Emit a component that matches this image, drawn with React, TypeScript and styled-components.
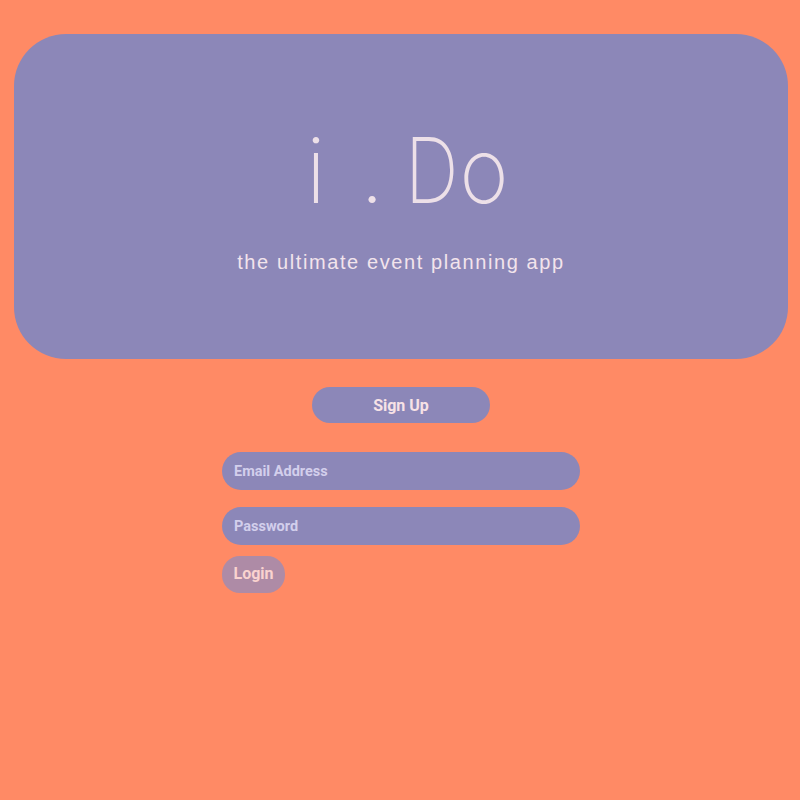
import React from "react";
import styled, { createGlobalStyle } from "styled-components";

const Global = createGlobalStyle`
  html, body { margin: 0; padding: 0; background: #ff8a65; }
  body { font-family: Roboto, "Liberation Sans", Arial, sans-serif; }
  * { box-sizing: border-box; }
`;

const Page = styled.div`
  min-height: 800px;
  padding: 34px 12px 0 14px;
  display: flex;
  flex-direction: column;
  align-items: center;
`;

const Hero = styled.header`
  width: 100%;
  height: 325px;
  background: #8c87b8;
  border-radius: 52px;
  display: flex;
  flex-direction: column;
  align-items: center;
  padding-top: 91px;
`;

const Title = styled.h1`
  margin: 0;
  display: flex;
  font-family: Inter, "DejaVu Sans", sans-serif;
  font-weight: 200;
  font-size: 91px;
  line-height: 91px;
  color: #ede0e8;
  padding-right: 2px;
`;

const Glyph = styled.span<{ $sx: number }>`
  display: inline-block;
  width: 56px;
  text-align: center;
  transform: scaleX(${(p) => p.$sx});
`;

const Subtitle = styled.p`
  margin: 35px 0 0;
  font-family: "Liberation Sans", Arial, sans-serif;
  font-size: 20px;
  letter-spacing: 1.6px;
  color: #f3e4ec;
`;

const SignUp = styled.button`
  margin-top: 28px;
  width: 178px;
  height: 36px;
  border: none;
  border-radius: 18px;
  background: #8c87b8;
  color: #f7e2e6;
  font-family: Roboto, "Liberation Sans", sans-serif;
  font-weight: 700;
  font-size: 16px;
  padding: 0;
`;

const Form = styled.form`
  margin-top: 29px;
  width: 358px;
  display: flex;
  flex-direction: column;
  align-items: flex-start;
`;

const Field = styled.input<{ $gap: number }>`
  width: 358px;
  height: 38px;
  border: none;
  border-radius: 19px;
  background: #8c87b8;
  padding: 0 12px;
  font-family: Roboto, "Liberation Sans", sans-serif;
  font-weight: 700;
  font-size: 14.5px;
  color: #f3e4ec;
  outline: none;
  margin-bottom: ${(p) => p.$gap}px;
  &::placeholder { color: #d3cfec; }
`;

const Login = styled.button`
  width: 63px;
  height: 37px;
  border: none;
  border-radius: 18px;
  background: #ae8ba6;
  color: #fad3cf;
  font-family: Roboto, "Liberation Sans", sans-serif;
  font-weight: 700;
  font-size: 16px;
  padding: 0 0 2px;
`;

const letters: { c: string; sx: number }[] = [
  { c: "i", sx: 1 },
  { c: ".", sx: 1 },
  { c: "D", sx: 0.82 },
  { c: "o", sx: 0.92 },
];

export default function App() {
  return (
    <>
      <Global />
      <Page>
        <Hero>
          <Title aria-label="i.Do">
            {letters.map((l, i) => (
              <Glyph key={i} $sx={l.sx} aria-hidden="true">
                {l.c}
              </Glyph>
            ))}
          </Title>
          <Subtitle>the ultimate event planning app</Subtitle>
        </Hero>
        <SignUp type="button">Sign Up</SignUp>
        <Form onSubmit={(e) => e.preventDefault()}>
          <Field $gap={17} type="email" placeholder="Email Address" />
          <Field $gap={11} type="password" placeholder="Password" />
          <Login type="submit">Login</Login>
        </Form>
      </Page>
    </>
  );
}
